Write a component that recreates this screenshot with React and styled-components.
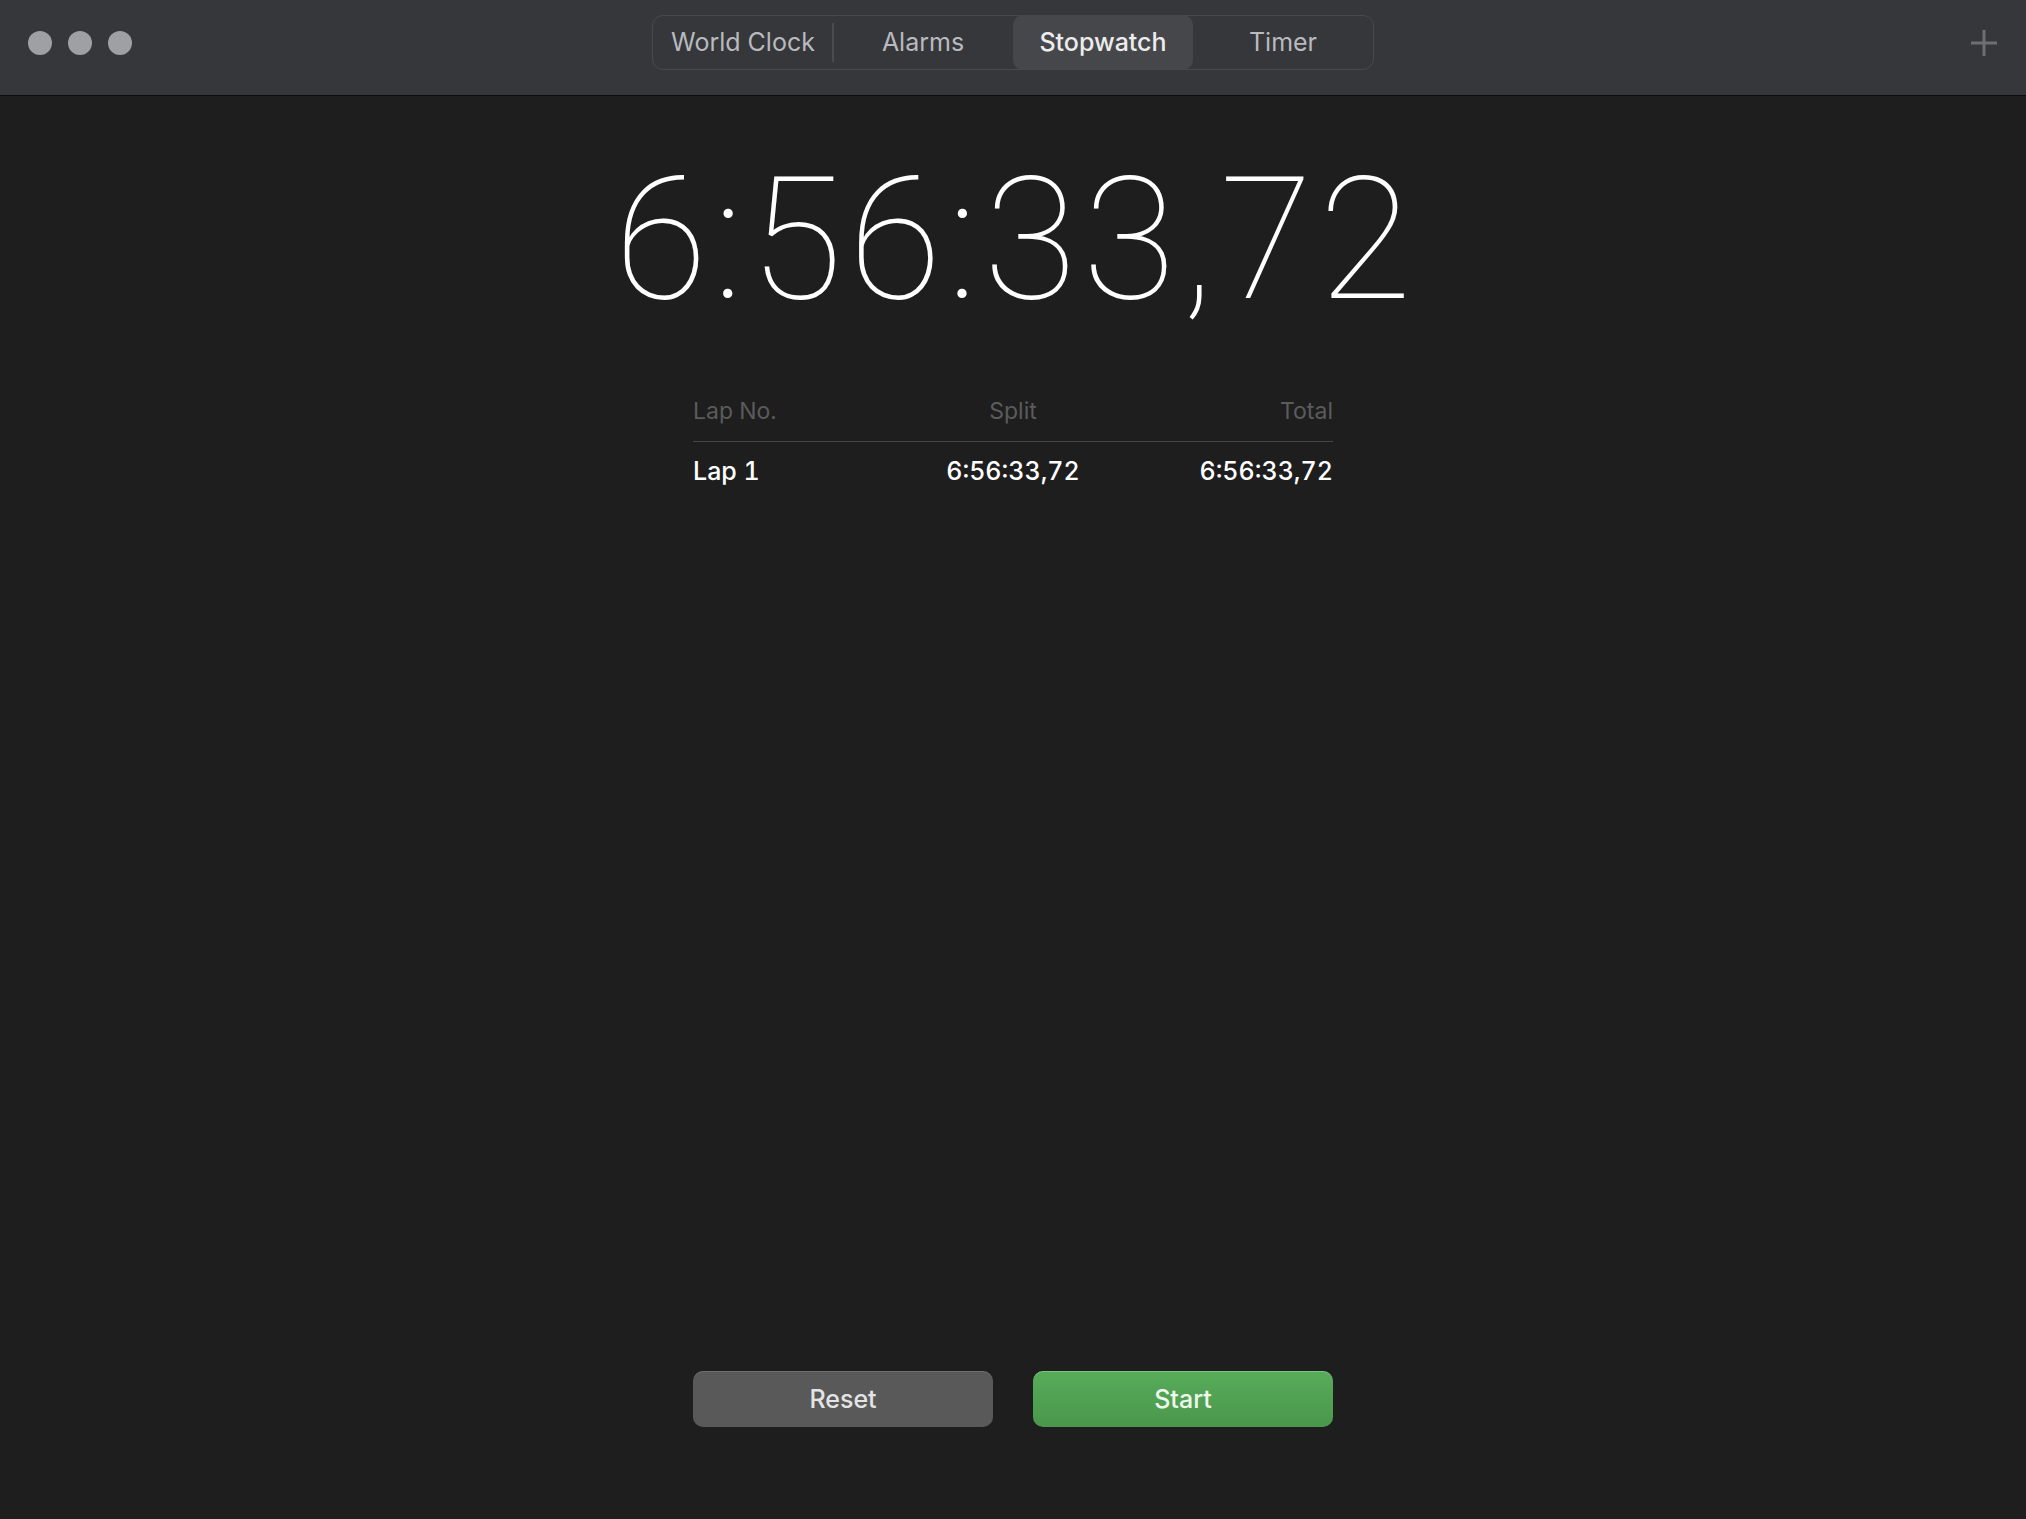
import React from 'react'
import styled, { createGlobalStyle } from 'styled-components'

const GlobalStyle = createGlobalStyle`
  html, body {
    margin: 0;
    padding: 0;
    background: #1e1e1e;
  }
  body {
    font-family: Inter, "Liberation Sans", sans-serif;
    -webkit-font-smoothing: antialiased;
  }
`

const tabs = ['World Clock', 'Alarms', 'Stopwatch', 'Timer']
const activeTab = 2

const laps = [{ name: 'Lap 1', split: '6:56:33,72', total: '6:56:33,72' }]

const Window = styled.div`
  display: flex;
  flex-direction: column;
  height: 100vh;
  overflow: hidden;
`

const TitleBar = styled.header`
  display: grid;
  grid-template-columns: 1fr auto 1fr;
  align-items: center;
  height: 96px;
  padding-bottom: 10px;
  box-sizing: border-box;
  background: #36373b;
  border-bottom: 1px solid #0c0c0c;
`

const Lights = styled.div`
  display: flex;
  gap: 16px;
  padding-left: 28px;
`

const Light = styled.span`
  width: 24px;
  height: 24px;
  border-radius: 50%;
  background: #9fa0a4;
`

const Segmented = styled.nav`
  display: flex;
  height: 55px;
  box-sizing: border-box;
  border: 1px solid #48494d;
  border-radius: 11px;
`

const Segment = styled.div`
  position: relative;
  display: flex;
  align-items: center;
  justify-content: center;
  width: 180px;
  margin: ${p => (p.$active ? '-1px 0' : '0')};
  padding-bottom: 2px;
  border-radius: 10px;
  background: ${p => (p.$active ? '#46474b' : 'transparent')};
  color: ${p => (p.$active ? '#ececec' : '#b9babe')};
  font-size: 25px;
  font-weight: ${p => (p.$active ? 500 : 400)};

  &::before {
    content: '';
    display: ${p => (p.$divider ? 'block' : 'none')};
    position: absolute;
    left: -1px;
    top: 7px;
    bottom: 7px;
    width: 2px;
    background: #4a4b4f;
  }
`

const AddButton = styled.div`
  justify-self: end;
  display: flex;
  margin-right: 28px;
  color: #6e6f73;
`

const Main = styled.main`
  flex: 1;
  display: flex;
  flex-direction: column;
  align-items: center;
`

const BigTime = styled.div`
  margin-top: 59px;
  margin-right: -6px;
  font-family: Roboto, Inter, sans-serif;
  font-weight: 100;
  font-size: 170px;
  line-height: 1;
  letter-spacing: 6px;
  color: #ffffff;
`

const LapTable = styled.div`
  width: 640px;
  margin-top: 72px;
`

const LapRow = styled.div`
  display: grid;
  grid-template-columns: 1fr 1fr 1fr;
  font-size: ${p => (p.$head ? '23px' : '25px')};
  line-height: ${p => (p.$head ? '28px' : '30px')};
  font-weight: ${p => (p.$head ? 400 : 500)};
  color: ${p => (p.$head ? '#5b5b5b' : '#ffffff')};
  padding-bottom: ${p => (p.$head ? '16px' : '0')};
  margin-top: ${p => (p.$head ? '0' : '14px')};
  border-bottom: ${p => (p.$head ? '1px solid #464646' : 'none')};
  font-variant-numeric: tabular-nums;

  & > :nth-child(2) { text-align: center; }
  & > :nth-child(3) { text-align: right; }
`

const ButtonRow = styled.div`
  display: flex;
  gap: 40px;
  margin-top: auto;
  margin-bottom: 92px;
`

const ActionButton = styled.button`
  width: 300px;
  height: 56px;
  border: none;
  border-radius: 10px;
  font-family: inherit;
  font-size: 25px;
  font-weight: 500;
  color: ${p => (p.$variant === 'start' ? '#eef7ee' : '#e4e4e4')};
  background: ${p =>
    p.$variant === 'start'
      ? 'linear-gradient(#57ac59, #4a974c)'
      : '#595959'};
  box-shadow: inset 0 1px 0
    ${p => (p.$variant === 'start' ? 'rgba(190, 240, 190, 0.35)' : 'rgba(255, 255, 255, 0.14)')};
`

const PlusIcon = () => (
  <svg width='28' height='28' viewBox='0 0 28 28' fill='none' stroke='currentColor' strokeWidth='3'>
    <path d='M14 1v26M1 14h26' />
  </svg>
)

export default function App () {
  return (
    <Window>
      <GlobalStyle />
      <TitleBar>
        <Lights>
          <Light />
          <Light />
          <Light />
        </Lights>
        <Segmented>
          {tabs.map((t, i) => (
            <Segment
              key={t}
              $active={i === activeTab}
              $divider={i > 0 && i !== activeTab && i - 1 !== activeTab}
            >
              {t}
            </Segment>
          ))}
        </Segmented>
        <AddButton>
          <PlusIcon />
        </AddButton>
      </TitleBar>

      <Main>
        <BigTime>6:56:33,72</BigTime>

        <LapTable>
          <LapRow $head>
            <span>Lap No.</span>
            <span>Split</span>
            <span>Total</span>
          </LapRow>
          {laps.map(lap => (
            <LapRow key={lap.name}>
              <span>{lap.name}</span>
              <span>{lap.split}</span>
              <span>{lap.total}</span>
            </LapRow>
          ))}
        </LapTable>

        <ButtonRow>
          <ActionButton $variant='reset'>Reset</ActionButton>
          <ActionButton $variant='start'>Start</ActionButton>
        </ButtonRow>
      </Main>
    </Window>
  )
}
